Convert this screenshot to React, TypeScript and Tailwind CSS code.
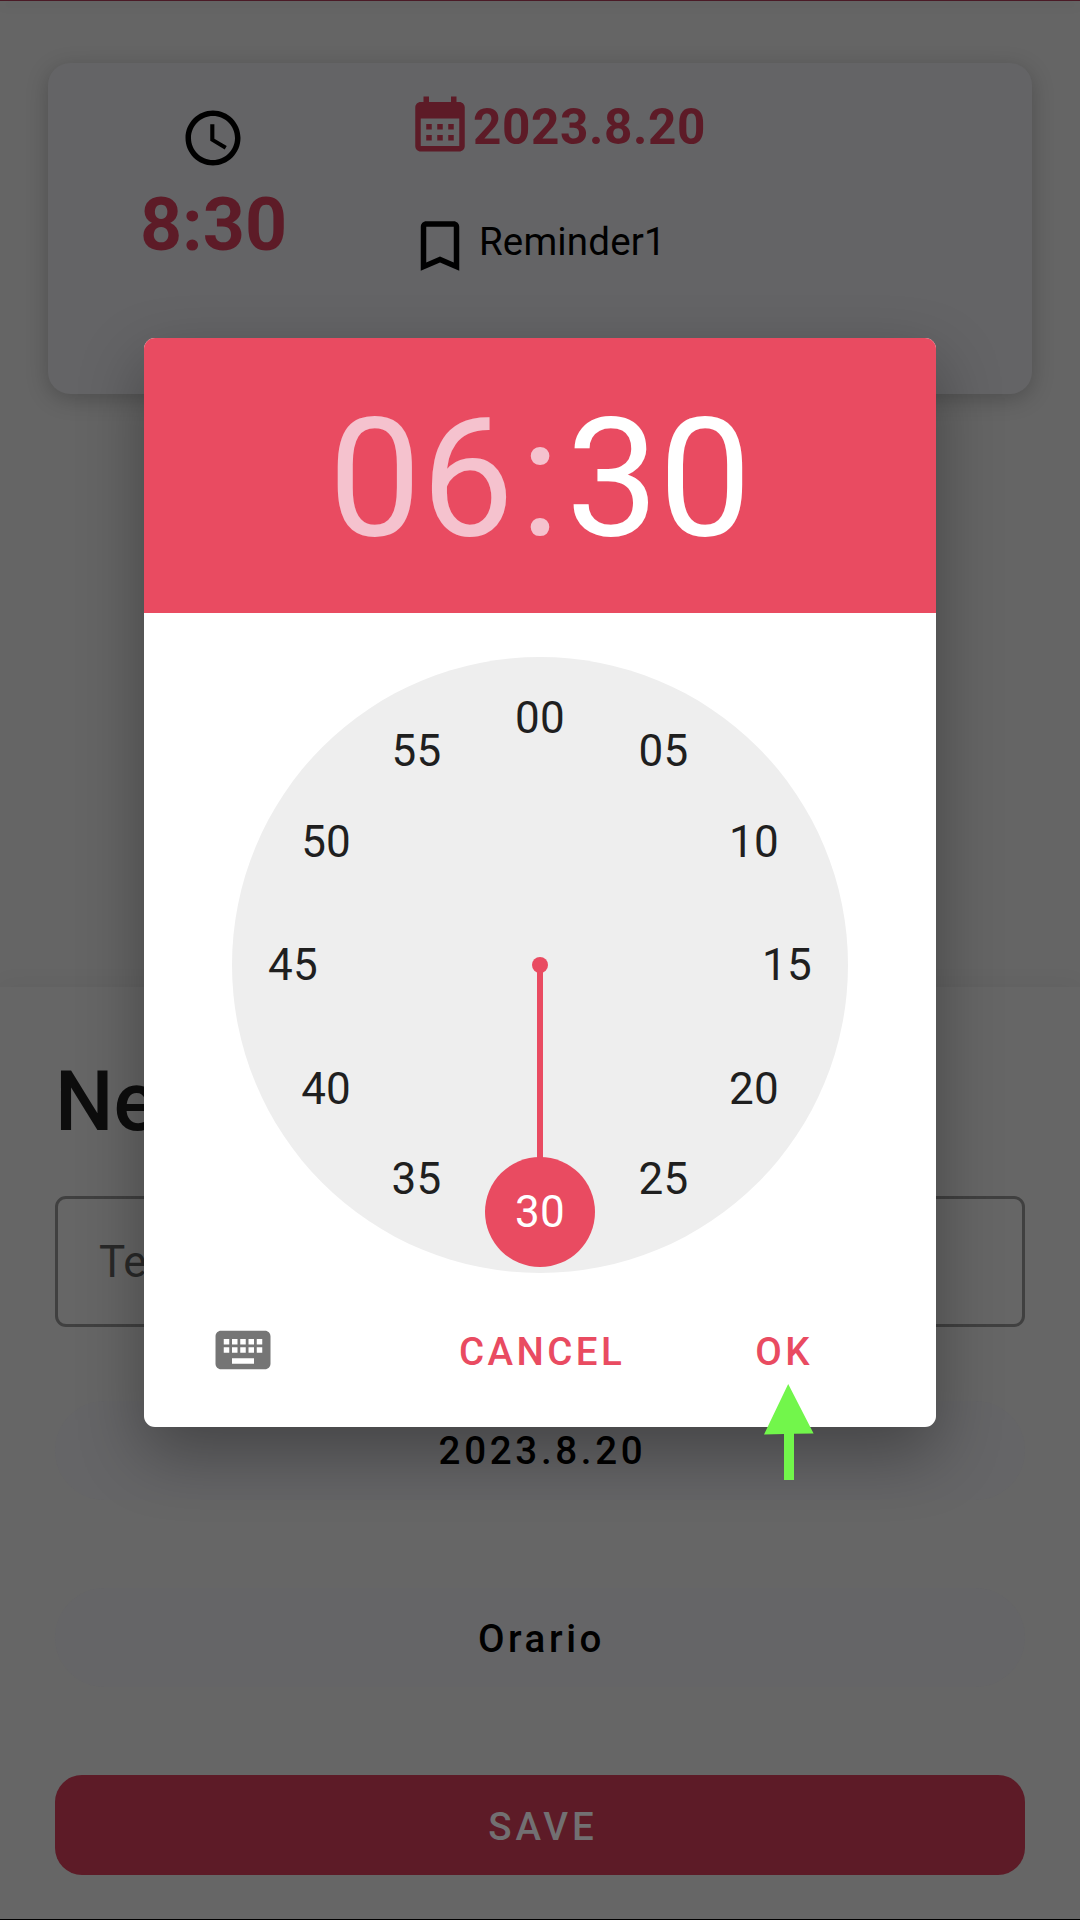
import React from "react";

const FONT = "font-['Roboto','Liberation_Sans',sans-serif]";

type IconProps = { d: string; className: string };

function Icon({ d, className }: IconProps) {
  return (
    <svg viewBox="0 0 24 24" fill="currentColor" className={`size-[66px] shrink-0 ${className}`}>
      <path d={d} />
    </svg>
  );
}

const ICONS = {
  clock:
    "M11.99 2C6.47 2 2 6.48 2 12s4.47 10 9.99 10C17.52 22 22 17.52 22 12S17.52 2 11.99 2zM12 20c-4.42 0-8-3.58-8-8s3.58-8 8-8 8 3.58 8 8-3.58 8-8 8zm.5-13H11v6l5.25 3.15.75-1.23-4.5-2.67z",
  calendar:
    "M19 4h-1V2h-2v2H8V2H6v2H5c-1.11 0-1.99.9-1.99 2L3 20c0 1.1.89 2 2 2h14c1.1 0 2-.9 2-2V6c0-1.1-.9-2-2-2zm0 16H5V10h14v10zM9 14H7v-2h2v2zm4 0h-2v-2h2v2zm4 0h-2v-2h2v2zm-8 4H7v-2h2v2zm4 0h-2v-2h2v2zm4 0h-2v-2h2v2z",
  bookmark:
    "M17 3H7c-1.1 0-1.99.9-1.99 2L5 21l7-3 7 3V5c0-1.1-.9-2-2-2zm0 15l-5-2.18L7 18V5h10v13z",
  keyboard:
    "M20 5H4c-1.1 0-1.99.9-1.99 2L2 17c0 1.1.9 2 2 2h16c1.1 0 2-.9 2-2V7c0-1.1-.9-2-2-2zm-9 3h2v2h-2V8zm0 3h2v2h-2v-2zM8 8h2v2H8V8zm0 3h2v2H8v-2zm-1 2H5v-2h2v2zm0-3H5V8h2v2zm9 7H8v-2h8v2zm0-4h-2v-2h2v2zm0-3h-2V8h2v2zm3 3h-2v-2h2v2zm0-3h-2V8h2v2z",
};

function ReminderCard() {
  return (
    <section className="mx-12 mt-[62px] flex h-[331px] rounded-[22px] bg-[#646466] shadow-[0_5px_22px_rgba(0,0,0,0.22)]">
      <div className="flex w-[330px] flex-col items-center pt-[42px]">
        <Icon d={ICONS.clock} className="text-black" />
        <div className="mt-[10px] ml-[1px] text-[73.5px] leading-[88px] font-bold text-[#5d1b27]">8:30</div>
      </div>
      <div className="ml-[29px] flex flex-col pt-7">
        <div className="flex items-start text-[#5d1b27]">
          <Icon d={ICONS.calendar} className="" />
          <span className="mt-[3px] text-[49.5px] leading-[66px] font-bold tracking-[0.6px]">2023.8.20</span>
        </div>
        <div className="mt-[49px] flex items-end text-black">
          <Icon d={ICONS.bookmark} className="" />
          <span className="mb-[4px] ml-[6px] text-[38.5px] leading-[66px] tracking-[0.15px]">Reminder1</span>
        </div>
      </div>
    </section>
  );
}

function NewReminderForm() {
  return (
    <section className="flex h-[932px] flex-col bg-[#666666] px-[55px] shadow-[0_-2px_22px_rgba(0,0,0,0.05)]">
      <h1 className="mt-[66px] text-[82.5px] leading-[97px] font-medium text-[#0d0d0d]">New</h1>
      <div className="mt-[46px] flex h-[131px] items-center rounded-[11px] border-[3px] border-[#404040] pl-[41px] text-[44px] text-[#292929]">
        Text
      </div>
      <button className="mt-[74px] h-[99px] rounded-full bg-[#656567] pl-[5px] text-[38.5px] font-medium tracking-[3.7px] text-black">
        2023.8.20
      </button>
      <button className="mt-[88px] h-[99px] rounded-full bg-[#656567] pt-[2px] pl-[3px] text-[38.5px] font-medium tracking-[3.6px] text-black">
        Orario
      </button>
      <button className="mt-[88px] h-[100px] rounded-[27px] bg-[#5d1b27] pt-[3px] pl-[6px] text-[38.5px] font-medium tracking-[3.9px] text-[#727072]">
        SAVE
      </button>
    </section>
  );
}

const MINUTES = ["00", "05", "10", "15", "20", "25", "30", "35", "40", "45", "50", "55"];
const DIAL_RADIUS = 308;
const LABEL_RADIUS = 247;

function Dial() {
  return (
    <div className="relative mx-auto mt-11 size-[616px] rounded-full bg-[#eeeeee]">
      <svg viewBox="0 0 616 616" className="size-full fill-[#e94b61]">
        <circle cx="308" cy="308" r="8" />
        <rect x="305" y="308" width="6" height="200" />
        <circle cx="308" cy="555" r="55" />
      </svg>
      {MINUTES.map((label, i) => {
        const angle = (i * Math.PI) / 6;
        return (
          <span
            key={label}
            className={`absolute -translate-x-1/2 -translate-y-1/2 text-[44px] leading-none tracking-[0.2px] ${
              label === "30" ? "text-white" : "text-[#1f1f1f]"
            }`}
            style={{
              left: DIAL_RADIUS + LABEL_RADIUS * Math.sin(angle),
              top: DIAL_RADIUS - LABEL_RADIUS * Math.cos(angle),
            }}
          >
            {label}
          </span>
        );
      })}
    </div>
  );
}

function TimePicker() {
  return (
    <div className="h-[1089px] w-[792px] overflow-hidden rounded-[11px] bg-white">
      <div className="flex h-[275px] items-center justify-center bg-[#e94b61] pt-[6px] text-[165px] leading-none text-[#f5c2ce]">
        <span>06</span>
        <span className="w-[52px] text-center">:</span>
        <span className="text-white">30</span>
      </div>
      <Dial />
      <div className="mt-11 flex h-[66px] items-center pl-[66px] text-[38.5px] font-medium tracking-[3.44px] text-[#e94b61]">
        <Icon d={ICONS.keyboard} className="text-[#757575]" />
        <span className="mt-[4px] ml-[183px]">CANCEL</span>
        <span className="mt-[4px] ml-[130px]">OK</span>
      </div>
    </div>
  );
}

export default function App() {
  return (
    <div className={`relative h-[1920px] w-[1080px] overflow-hidden bg-[#656565] ${FONT}`}>
      <div className="h-px bg-[#4a1a26] shadow-[0_4px_12px_rgba(0,0,0,0.2)]" />
      <ReminderCard />
      <div className="h-[593px]" />
      <NewReminderForm />
      <div className="h-px bg-black" />

      <div className="absolute inset-0 flex items-start justify-center pt-[338px]">
        <div className="rounded-[11px] shadow-[0_26px_66px_rgba(0,0,0,0.33)]">
          <TimePicker />
        </div>
      </div>

      <svg viewBox="0 0 50 96" className="absolute top-[1384px] left-[764px] h-[96px] w-[50px]" fill="#72f64b">
        <path d="M24.2 0 49.6 49.6 30 49.8V96H20V50.1L0 50.4z" />
      </svg>
    </div>
  );
}
